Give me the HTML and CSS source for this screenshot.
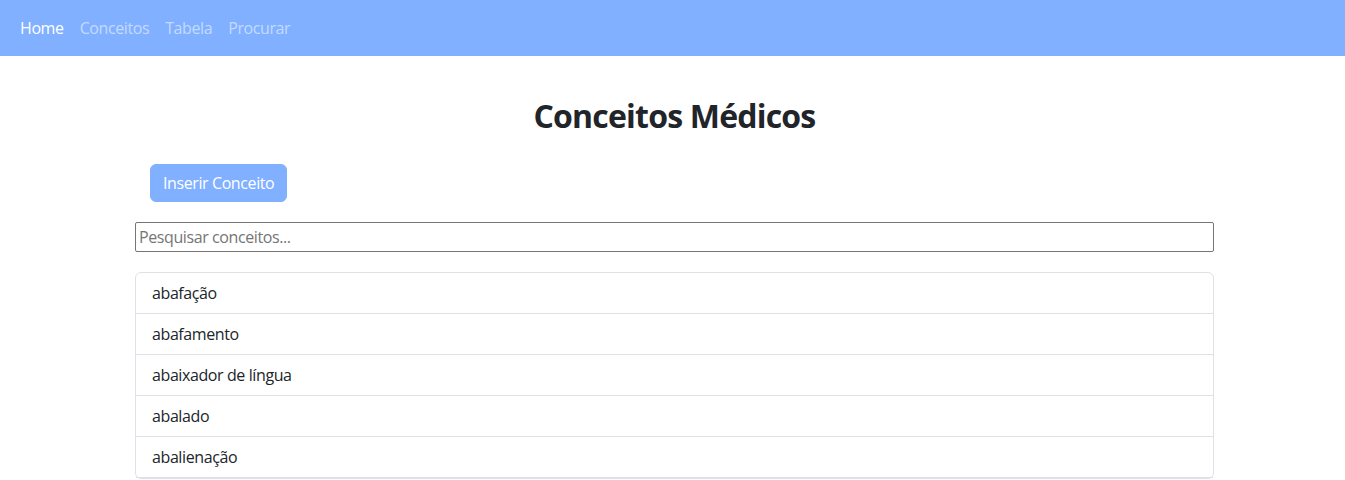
FILE: index.html
```html
<!DOCTYPE html>
<html lang="pt">
<head>
<meta charset="utf-8">
<title>Conceitos Médicos</title>
<link rel="stylesheet" href="styles.css">
</head>
<body>
<nav class="navbar">
  <a class="nav-link active" href="#">Home</a>
  <a class="nav-link" href="#">Conceitos</a>
  <a class="nav-link" href="#">Tabela</a>
  <a class="nav-link" href="#">Procurar</a>
</nav>
<main class="container">
  <h1 class="title">Conceitos Médicos</h1>
  <div class="actions">
    <button class="btn" type="button">Inserir Conceito</button>
  </div>
  <input class="search" type="text" placeholder="Pesquisar conceitos...">
  <ul class="list">
    <li class="list-item">abafação</li>
    <li class="list-item">abafamento</li>
    <li class="list-item">abaixador de língua</li>
    <li class="list-item">abalado</li>
    <li class="list-item">abalienação</li>
  </ul>
</main>
</body>
</html>
```
FILE: styles.css
```css
* { box-sizing: border-box; }
body {
  margin: 0;
  font-family: "Open Sans", "Noto Sans", sans-serif;
  font-size: 16px;
  line-height: 24px;
  letter-spacing: -0.4px;
  color: #212529;
  background: #fff;
}
.navbar {
  height: 56px;
  background: #80b0ff;
  display: flex;
  align-items: center;
  padding: 0 12px;
}
.nav-link {
  padding: 8px;
  color: rgba(255,255,255,0.55);
  text-decoration: none;
}
.nav-link.active { color: #fff; }
.container {
  margin: 0 131px 0 135px;
  display: flex;
  flex-direction: column;
}
.title {
  margin: 36px 0 0;
  text-align: center;
  font-size: 32px;
  line-height: 48px;
  font-weight: 700;
  letter-spacing: -0.8px;
}
.actions {
  margin-top: 24px;
  padding-left: 15px;
}
.btn {
  font-family: inherit;
  font-size: 16px;
  line-height: 24px;
  letter-spacing: -0.4px;
  padding: 6px 12px;
  border: 1px solid #80b0ff;
  border-radius: 6px;
  background: #80b0ff;
  color: #fff;
}
.search {
  margin-top: 20px;
  height: 30px;
  font-family: inherit;
  font-size: 16px;
  letter-spacing: -0.4px;
  padding: 1px 3px;
  border: 1px solid #767676;
  border-radius: 2px;
  color: #212529;
}
.search::placeholder { color: #757575; }
.list {
  list-style: none;
  margin: 20px 0 0;
  padding: 0;
  border: 1px solid #dee2e6;
  border-radius: 6px;
}
.list-item {
  padding: 8px 16px;
  border-bottom: 1px solid #dee2e6;
}
```
